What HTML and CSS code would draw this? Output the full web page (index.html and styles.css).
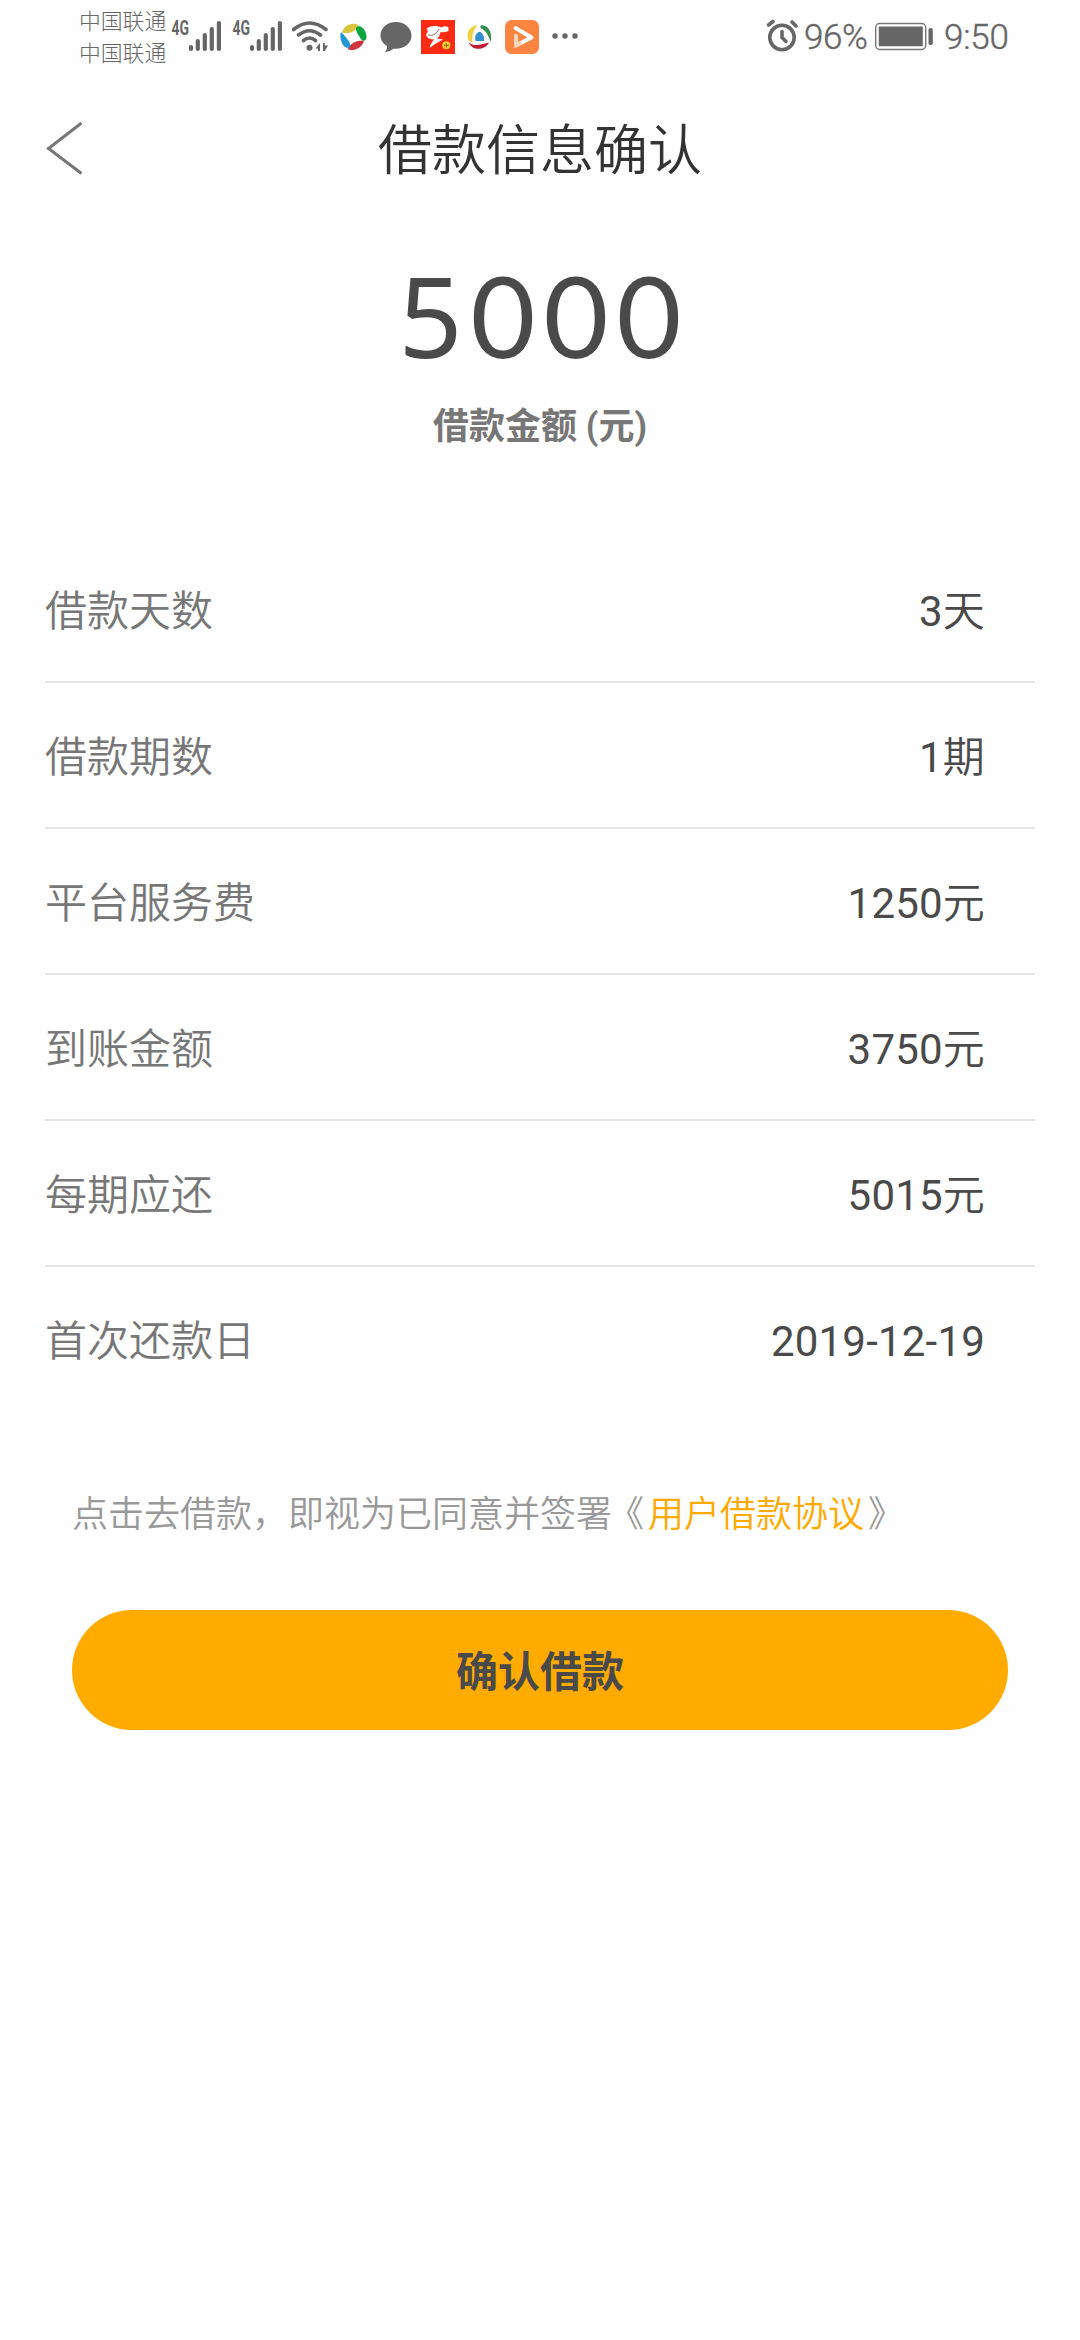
FILE: index.html
```html
<!DOCTYPE html>
<html lang="zh-CN">
<head>
<meta charset="utf-8">
<title>借款信息确认</title>
<link rel="stylesheet" href="styles.css">
</head>
<body>
<div class="status">
  <div class="carriers"><span>中国联通</span><span>中国联通</span></div>
  <svg class="ico" width="61" height="80" viewBox="170 0 61 80">
    <text class="net" x="171.5" y="34.5" textLength="17.5" lengthAdjust="spacingAndGlyphs">4G</text>
    <path class="bars" d="M191 47v2M197.8 41v8M204.8 35v14M211.8 29v20M218.9 23v26"/>
  </svg>
  <svg class="ico" width="61" height="80" viewBox="170 0 61 80">
    <text class="net" x="171.5" y="34.5" textLength="17.5" lengthAdjust="spacingAndGlyphs">4G</text>
    <path class="bars" d="M191 47v2M197.8 41v8M204.8 35v14M211.8 29v20M218.9 23v26"/>
  </svg>
  <svg class="ico" width="42" height="80" viewBox="292 0 42 80">
    <path class="wave" d="M293.5 29.5Q309.5 16.5 326 29.5M298.5 35Q309.500 26.500 320.500 35M303.500 40.500Q309.500 35.500 315.500 40.500"/>
    <circle cx="309.500" cy="47.700" r="3" fill="#666"/>
    <path d="M315.500 48.500l4.500-5.500v8h-2v-2.500zM323 43h1.800v2.500h3.200l-3.200 5.500H323z" fill="#666"/>
  </svg>
  <svg class="ico" width="40" height="80" viewBox="333.500 0 40 80">
    <path fill="#d8c53c" d="M342 31C345 24 354 22 358 25.500C357 30 350 34 344 33Q341 33 342 31z"/>
    <path fill="#0aa53f" d="M356 27C361 24 366 31 366 36.500C366 42 362 41.500 360 38.500C358 35 354 30 356 27z"/>
    <path fill="#d2343b" d="M347.500 48C350 43 357 40 363 40.500C364.500 43 358 50 352 50C349 50 347 49.500 347.500 48z"/>
    <path fill="#2397d4" d="M340.500 32C344 35 349 41 350 45C350 49 345 48.500 342.500 45C340 41 339 36 340.500 32z"/>
  </svg>
  <svg class="ico" width="42" height="80" viewBox="373.500 0 42 80">
    <path fill="#666" d="M395.400 22C386.500 22 380 28 380 35.500C380 40 382.500 43.500 386.500 46Q387 49 384.500 52Q390 51.500 393 48.700C403.500 49.500 411 43.500 411 35.500C411 28 404.300 22 395.400 22z"/>
  </svg>
  <svg class="ico" width="44" height="80" viewBox="415 0 44 80">
    <path fill="#fb2a12" d="M420 20h34v34h-34z"/>
    <path fill="#fff" d="M425.500 28.500C430 25 437 25.500 440.500 27.500Q444 25 447.500 27.500V31Q443 33 439.500 32Q438.500 37 436 38.500L442 39.500L434 44L428.500 48L429.500 44.500L433 39.500C427 39.500 424.500 36 425.500 33.500Q428 31.500 425.500 28.500z"/>
    <path d="M427 35q7 2 11-6" fill="none" stroke="#8b4538" stroke-width=".8"/>
    <circle cx="445.300" cy="45.300" r="4" fill="#ffcc31"/><path d="M443 45.300h4.600M445.300 43v4.600" stroke="#8a6512" stroke-width="1"/>
  </svg>
  <svg class="ico" width="38" height="80" viewBox="459.500 0 38 80">
    <path fill="#f0cf3d" d="M477 25Q470.500 32 472 43Q465.500 40 467.500 32Q470 26 477 25z"/>
    <path fill="#358f52" d="M480 25.500C488 24 492.500 34 490 42Q487 31 480 28z"/>
    <path fill="#c51b35" d="M468 42C474 48 482 43.500 488.500 42.500C485 50 472 52 468 42z"/>
    <path fill="#3191cf" d="M475 41Q474 36 476 34Q479 29.500 482 34Q484 36 483.500 41z"/>
  </svg>
  <svg class="ico" width="46" height="80" viewBox="497 0 46 80">
    <rect x="504" y="20" width="34" height="34" rx="6.500" fill="#fb8440"/>
    <path d="M515 36v9.500L530.500 37.500L514.500 28" fill="none" stroke="#fff" stroke-width="3.800" stroke-linejoin="round" stroke-linecap="round"/>
    <path d="M515 36v9l4-2" fill="none" stroke="#ffd5b8" stroke-width="3.800" stroke-linecap="round"/>
  </svg>
  <svg class="ico" width="40" height="80" viewBox="543.500 0 40 80" fill="#666">
    <circle cx="554.500" cy="36" r="2.700"/><circle cx="564.500" cy="36" r="2.700"/><circle cx="574.500" cy="36" r="2.700"/>
  </svg>
  <div class="right">
    <svg class="ico" width="39" height="80" viewBox="765 0 39 80" fill="none" stroke="#666" stroke-width="3.600" stroke-linecap="round">
      <circle cx="782" cy="37.500" r="12.200"/>
      <path d="M782 31.500v6l4 4M768.500 25l4.500-3.500M792 22l4 4"/>
    </svg>
    <span class="battery-text">96%</span>
    <svg class="ico" width="60" height="80" viewBox="874 0 60 80">
      <rect x="875.700" y="23.500" width="50" height="26" rx="4" fill="none" stroke="#777" stroke-width="1.400"/>
      <rect x="878.800" y="26.500" width="44" height="19.800" rx=".8" fill="#666"/>
      <rect x="928.500" y="28" width="4.300" height="17" rx="1.800" fill="#666"/>
    </svg>
    <span class="clock">9:50</span>
  </div>
</div>

<header class="header">
  <svg class="back" width="40" height="56" viewBox="0 0 40 56"><path d="M35.500 3L2.500 28.500L35.500 53.500"/></svg>
  <h1 class="title">借款信息确认</h1>
</header>

<section class="summary">
  <div class="amount"><span class="lead">5</span>000</div>
  <div class="caption">借款金额 (元)</div>
</section>

<ul class="details">
  <li class="row"><span class="label">借款天数</span><span class="value">3<span class="unit">天</span></span></li>
  <li class="row"><span class="label">借款期数</span><span class="value">1<span class="unit">期</span></span></li>
  <li class="row"><span class="label">平台服务费</span><span class="value">1250<span class="unit">元</span></span></li>
  <li class="row"><span class="label">到账金额</span><span class="value">3750<span class="unit">元</span></span></li>
  <li class="row"><span class="label">每期应还</span><span class="value">5015<span class="unit">元</span></span></li>
  <li class="row"><span class="label">首次还款日</span><span class="value">2019-12-19</span></li>
</ul>

<p class="agreement">点击去借款<span class="comma">，</span>即视为已同意并签署<span class="open">《</span><a class="link">用户借款协议</a>》</p>
<button class="confirm" type="button">确认借款</button>
</body>
</html>
```
FILE: styles.css
```css
* { box-sizing: border-box; }
body {
  margin: 0;
  width: 1080px;
  min-height: 2340px;
  background: #fefefe;
  color: #4a4a4a;
  font-family: Roboto, "Noto Sans CJK SC", sans-serif;
  text-spacing-trim: space-all;
}
.status {
  display: flex;
  height: 80px;
  padding-left: 79px;
  color: #666;
}
.ico { flex: none; display: block; }
.carriers {
  display: flex;
  flex-direction: column;
  width: 91px;
  padding-top: 6px;
  font-size: 21.8px;
  font-weight: 300;
  line-height: 32px;
  white-space: nowrap;
}
.net { font: 700 20px Roboto, sans-serif; fill: #666; }
.bars { fill: none; stroke: #666; stroke-width: 4.2px; stroke-linecap: round; }
.wave { fill: none; stroke: #666; stroke-width: 3.6px; stroke-linecap: round; }
.right {
  display: flex;
  margin-left: auto;
  width: 315px;
  font-size: 35px;
  font-weight: 300;
  line-height: 75px;
  -webkit-text-stroke: .4px #666;
}
.battery-text { width: 70px; letter-spacing: -.4px; }
.clock { padding-left: 10px; letter-spacing: -.2px; }
.header {
  display: grid;
  grid-template-columns: 140px 1fr 140px;
  align-items: start;
  height: 140px;
}
.back { margin: 40px 0 0 46px; fill: none; stroke: #777; stroke-width: 3px; }
.title {
  margin: 32px 0 0;
  color: #333;
  font-size: 54px;
  font-weight: 350;
  line-height: 80px;
  text-align: center;
}
.summary { text-align: center; height: 317px; padding-top: 28px; }
.amount {
  font-family: Lato, sans-serif;
  font-size: 112px;
  line-height: 134px;
  height: 134px;
  letter-spacing: 8px;
  padding-left: 8px;
}
.lead { font-family: "Noto Sans", sans-serif; line-height: 1; }
.caption {
  margin-top: 18px;
  color: #777;
  font-size: 36px;
  font-weight: 700;
  line-height: 54px;
}
.details {
  margin: 0;
  padding: 0 45px;
  list-style: none;
  font-size: 42px;
}
.row {
  display: flex;
  justify-content: space-between;
  align-items: baseline;
  height: 146px;
  padding: 45px 50px 0 0;
  border-bottom: 2px solid #e5e5e5;
  line-height: 60px;
}
.row:last-child { border-bottom-color: transparent; }
.label { color: #777; font-weight: 350; }
.value { letter-spacing: .2px; }
.unit { font-family: "Noto Sans CJK SC", sans-serif; font-weight: 350; line-height: 1; }
.agreement {
  margin: 72px 72px 0;
  color: #999;
  font-size: 36px;
  font-weight: 350;
  line-height: 60px;
  white-space: nowrap;
}
.open { margin: 0 4px 0 -4px; }
.link { color: #fa0; margin-right: 4px; }
.confirm {
  display: block;
  width: 936px;
  height: 120px;
  margin: 65px 72px 0;
  padding: 0 0 3px;
  border: 0;
  border-radius: 60px;
  background: #ffab00;
  color: #4a4a4a;
  font: 700 42px Roboto, "Noto Sans CJK SC", sans-serif;
}
```
